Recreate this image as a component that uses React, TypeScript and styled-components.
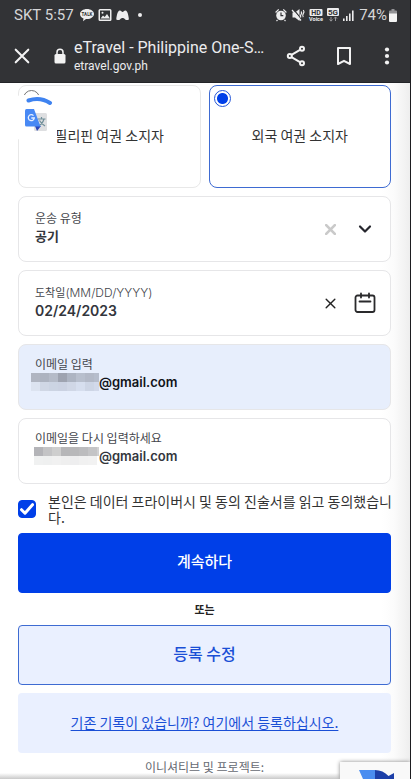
import React from "react";
import styled, { createGlobalStyle, css } from "styled-components";

const BLUE = "#003fe8";
const KR = '"Noto Sans CJK KR", sans-serif';

const GlobalStyle = createGlobalStyle`
  *, *::before, *::after { box-sizing: border-box; }
  html, body { margin: 0; background: #fff; }
  body { font-family: "Roboto", ${KR}; color: #333; }
  button, input, select { font: inherit; color: inherit; margin: 0; }
`;

const Screen = styled.div`
  position: relative;
  height: 100vh;
  overflow: hidden;
  display: flex;
  flex-direction: column;
  border-right: 1px solid #1d1d20;
`;

const BrowserBar = styled.header`
  flex: none;
  background: #323336;
  color: #ececee;
  font-family: "Roboto", sans-serif;
  border-bottom: 1px solid #232428;
`;

const StatusBar = styled.div`
  height: 30px;
  padding: 0 13px 0 14px;
  display: flex;
  align-items: center;
  justify-content: space-between;
  font-size: 15px;
  color: #d6d6d8;
`;

const StatusGroup = styled.div<{ $gap: number }>`
  display: flex;
  align-items: center;
  gap: ${(p) => p.$gap}px;
`;

const AddressRow = styled.div`
  height: 52px;
  padding: 0 12px;
  display: flex;
  align-items: center;
`;

const IconButton = styled.button<{ $w: number; $h?: number }>`
  flex: none;
  width: ${(p) => p.$w}px;
  height: ${(p) => p.$h ?? 32}px;
  padding: 0;
  border: 0;
  background: none;
  display: flex;
  align-items: center;
  justify-content: center;
  cursor: pointer;
`;

const LockSlot = styled.span`
  flex: none;
  width: 42px;
  display: flex;
  justify-content: flex-end;
  padding-right: 8px;
`;

const SiteInfo = styled.div`
  flex: 1;
  min-width: 0;
  white-space: nowrap;
`;

const SiteTitle = styled.div`
  font-size: 16px;
  line-height: 20px;
`;

const SiteHost = styled.div`
  font-size: 12px;
  line-height: 16px;
`;

const ToolGroup = styled.div`
  flex: none;
  display: flex;
  gap: 16px;
`;

const Page = styled.main`
  flex: 1;
  min-height: 0;
  overflow: hidden;
  padding: 2px 19px 0 18px;
  background: linear-gradient(to left, #eeeeee 0, #fbfbfb 16px, #fff 28px);
`;

const Form = styled.form`
  display: flex;
  flex-direction: column;
  gap: 8px;
`;

const Choices = styled.div`
  display: grid;
  grid-template-columns: 1fr 1fr;
  gap: 8px;
`;

const Choice = styled.label<{ $active?: boolean }>`
  position: relative;
  height: 103px;
  padding-bottom: 3px;
  border: 1px solid ${(p) => (p.$active ? "#3e6bd2" : "#e8e8e8")};
  border-radius: 8px;
  background: #fff;
  display: flex;
  align-items: center;
  justify-content: center;
  font: 400 14px/20px ${KR};
`;

const Radio = styled.input`
  appearance: none;
  position: absolute;
  top: 4px;
  left: 4px;
  width: 17px;
  height: 17px;
  margin: 0;
  border: 1px solid #777;
  border-radius: 50%;
  &:checked {
    border-color: #2456d8;
    background: radial-gradient(circle, ${BLUE} 5px, #fff 6px);
  }
`;

const TranslateOverlay = styled.div`
  position: absolute;
  z-index: 1;
  left: 17px;
  top: 95px;
  width: 40px;
  height: 45px;
  background: #fff;
  border-radius: 4px;
`;

const FieldBox = styled.div<{ $filled?: boolean }>`
  height: 66px;
  padding: 0 14px 0 16px;
  border: 1px solid #e6e6e8;
  border-radius: 8px;
  background: ${(p) => (p.$filled ? "#e7eefc" : "#fff")};
  color: ${(p) => (p.$filled ? "#111319" : "#33363d")};
  display: flex;
  align-items: center;
  gap: 12px;
`;

const FieldBody = styled.div<{ $raised?: boolean }>`
  flex: 1;
  min-width: 0;
  display: flex;
  flex-direction: column;
  padding-bottom: ${(p) => (p.$raised ? 8 : 4)}px;
`;

const FieldLabel = styled.label<{ $compact?: boolean }>`
  font: 400 ${(p) => (p.$compact ? 11 : 12)}px/18px ${KR};
  color: #44464c;
`;

const LatinLabel = styled.span`
  font: 300 12px/18px "Inter", sans-serif;
`;

const controlText = css`
  width: 100%;
  height: 18px;
  padding: 0;
  border: 0;
  outline: 0;
  background: none;
  appearance: none;
`;

const TextInput = styled.input<{ $size: number }>`
  ${controlText}
  font: 600 ${(p) => p.$size}px/18px "Inter", ${KR};
`;

const Select = styled.select`
  ${controlText}
  font: 600 13px/18px ${KR};
`;

const ValueRow = styled.div`
  display: flex;
  align-items: center;
`;

const Consent = styled.label`
  display: flex;
  align-items: center;
  gap: 12px;
  margin-right: -4px;
  min-height: 33px;
  font: 400 14px/16px ${KR};
  word-break: break-all;
`;

const CheckWrap = styled.span`
  position: relative;
  flex: none;
  width: 18px;
  height: 18px;
`;

const CheckBox = styled.input`
  appearance: none;
  display: block;
  width: 18px;
  height: 18px;
  margin: 0;
  border: 1px solid ${BLUE};
  border-radius: 4px;
  &:checked {
    background: ${BLUE};
  }
  &:checked + svg {
    display: block;
  }
`;

const CheckMark = styled.svg`
  display: none;
  position: absolute;
  inset: 0;
  pointer-events: none;
`;

const ActionButton = styled.button<{ $primary?: boolean }>`
  height: 60px;
  padding: 0 0 4px;
  border: 1px solid ${(p) => (p.$primary ? BLUE : "#3e6bd2")};
  border-radius: 4px;
  background: ${(p) => (p.$primary ? BLUE : "#eaf0ff")};
  color: ${(p) => (p.$primary ? "#fff" : "#1a4fd6")};
  font: 500 ${(p) => (p.$primary ? 15 : 16)}px/24px ${KR};
  cursor: pointer;
`;

const OrText = styled.div`
  font: 700 11px/16px ${KR};
  text-align: center;
  color: #222;
`;

const LinkPanel = styled.div`
  height: 60px;
  padding-bottom: 2px;
  border-radius: 4px;
  background: #eaf0ff;
  display: flex;
  align-items: center;
  justify-content: center;
`;

const RecordLink = styled.a`
  font: 400 14px/20px ${KR};
  color: #1a4fd6;
  text-decoration: underline;
  text-underline-offset: 2px;
`;

const FooterTitle = styled.div`
  font: 400 12px/16px ${KR};
  text-align: center;
  color: #666a72;
  margin-top: -2px;
`;

const BottomShade = styled.div`
  position: absolute;
  left: 0;
  right: 0;
  bottom: 0;
  height: 6px;
  background: linear-gradient(to bottom, rgba(120, 120, 120, 0), rgba(120, 120, 120, 0.4));
`;

const CaptchaBadge = styled.div`
  position: absolute;
  right: 0;
  bottom: 0;
  width: 70px;
  height: 17px;
  overflow: hidden;
  background: #f9f9f9;
  box-shadow: 0 0 4px #888;
  display: flex;
  align-items: flex-start;
  padding: 7px 0 0 18px;
`;

function StatusIconsLeft() {
  return (
    <svg width="66" height="14" viewBox="0 0 66 14" fill="#ededee">
      <path d="M7 1C3.200 1 0 3.200 0 6.100c0 2 1.400 3.600 3.500 4.400L3 13.200l3-2.100h1c3.900 0 7-2.100 7-5S10.900 1 7 1z" />
      <text x="7" y="8" fontSize="4.500" fontWeight="700" textAnchor="middle" fill="#323336" fontFamily="Roboto">TALK</text>
      <path fillRule="evenodd" d="M20 1h10a1.500 1.500 0 0 1 1.500 1.500v9A1.500 1.500 0 0 1 30 13H20a1.500 1.500 0 0 1-1.500-1.500v-9A1.500 1.500 0 0 1 20 1zm0 1.500v9h10v-9z" />
      <path d="M20.500 10.500l2.500-3 1.700 1.600L27 6l3 4.500z" />
      <circle cx="22.500" cy="4.800" r="1" />
      <path d="M36.300 11.500c.3-3.300 1.200-8.600 3.500-8.900 1.300-.1 1.900 1.500 2.800 1.500s1.500-1.600 2.800-1.500c2.300.3 3.200 5.600 3.500 8.900-1.500.8-2.700.8-3.700 0-.7-1-1.600-1.500-2.600-1.500s-1.900.5-2.600 1.500c-1 .8-2.200.8-3.700 0z" />
      <circle cx="60" cy="7" r="2" />
    </svg>
  );
}

function StatusIconsRight() {
  return (
    <svg width="80" height="16" viewBox="0 0 80 16" fill="#ededee">
      <circle cx="6" cy="8.500" r="4.800" />
      <path d="M.6 5.500 3.700 2.300M11.400 5.500 8.300 2.300M2.500 13l-1 1M9.500 13l1 1" stroke="#ededee" strokeWidth="1.200" />
      <path d="M6 5.500v3.200h2.300" stroke="#323336" strokeWidth="1.200" fill="none" />
      <path d="M17.500 5.500H20L24.500 2v12L20 10.500h-2.500z" />
      <path d="M18.300 2.200l9 11" stroke="#323336" strokeWidth="1.200" />
      <path d="M17 3l9 10.500M26 4.500q1.400 1.500 0 3t0 3M28.300 3q1.400 1.800 0 3.600t0 3.600" stroke="#ededee" strokeWidth="1.200" fill="none" />
      <rect x="34.500" y="2" width="13" height="7" rx="1" />
      <text x="41" y="8" fontSize="7" fontWeight="700" textAnchor="middle" fill="#323336" fontFamily="Roboto">HD</text>
      <text x="41" y="14" fontSize="5.500" fontWeight="700" textAnchor="middle" fontFamily="Roboto">Voice</text>
      <rect x="52" y="1" width="12" height="8" rx="1" />
      <text x="58" y="8" fontSize="8" fontWeight="700" textAnchor="middle" fill="#323336" fontFamily="Roboto">5G</text>
      <path d="M56 10v4M54.500 12.500l1.500 1.700 1.500-1.700M60.500 14v-4M59 11.600l1.500-1.700 1.500 1.700" stroke="#98989b" fill="none" />
      <path d="M68 11.500h1.600V14H68zM71 9h1.600v5H71zM74 6.500h1.600V14H74zM77 3.500h1.600V14H77z" />
    </svg>
  );
}

const Battery = () => (
  <svg width="8" height="13" viewBox="0 0 8 13">
    <path d="M2.500 0h3v1.500H7a1 1 0 0 1 1 1V5H0V2.500a1 1 0 0 1 1-1h1.500z" fill="#929295" />
    <path d="M0 4.500h8V12a1 1 0 0 1-1 1H1a1 1 0 0 1-1-1z" fill="#f4f4f4" />
  </svg>
);

function Cross({ size, stroke, width }: { size: number; stroke: string; width: number }) {
  return (
    <svg width={size} height={size} viewBox="0 0 14 14" fill="none" stroke={stroke} strokeWidth={width} strokeLinecap="round">
      <path d="M1.500 1.500l11 11M12.500 1.500l-11 11" />
    </svg>
  );
}

function Mosaic({ top, bottom, width }: { top: string[]; bottom: string[]; width: number }) {
  return (
    <svg width={width} height="18" viewBox={`0 0 ${width} 18`} shapeRendering="crispEdges" aria-hidden="true">
      {top.map((c, i) => (
        <rect key={i} x={i * 9} y="0" width="9" height="9" fill={c} />
      ))}
      {bottom.map((c, i) => (
        <rect key={i} x={i * 9} y="9" width="9" height="9" fill={c} />
      ))}
    </svg>
  );
}

const MosaicSlot = styled.span<{ $outdent: number }>`
  flex: none;
  display: flex;
  height: 18px;
  margin-left: -${(p) => p.$outdent}px;
`;

export default function App() {
  return (
    <>
      <GlobalStyle />
      <Screen>
        <BrowserBar>
          <StatusBar>
            <StatusGroup $gap={6}>
              <span>SKT 5:57</span>
              <StatusIconsLeft />
            </StatusGroup>
            <StatusGroup $gap={4}>
              <StatusIconsRight />
              <StatusGroup $gap={2}>
                <span>74%</span>
                <Battery />
              </StatusGroup>
            </StatusGroup>
          </StatusBar>
          <AddressRow>
            <IconButton $w={20} aria-label="Close">
              <Cross size={16} stroke="#f3f3f3" width={1.8} />
            </IconButton>
            <LockSlot>
              <svg width="12" height="16" viewBox="0 0 12 16">
                <rect x="0.500" y="6" width="11" height="9.500" rx="1.500" fill="#f3f3f3" />
                <path d="M3 7V4.300a3 3 0 0 1 6 0V7" fill="none" stroke="#f3f3f3" strokeWidth="1.500" />
              </svg>
            </LockSlot>
            <SiteInfo>
              <SiteTitle>eTravel - Philippine One-S…</SiteTitle>
              <SiteHost>etravel.gov.ph</SiteHost>
            </SiteInfo>
            <ToolGroup>
              <IconButton $w={32} aria-label="Share">
                <svg width="20" height="22" viewBox="0 0 20 22" fill="none" stroke="#f3f3f3" strokeWidth="2">
                  <path d="M5.500 9.800l8.500-5M5.500 12.200l8.500 5" />
                  <circle cx="3.800" cy="11" r="2" />
                  <circle cx="16" cy="3.700" r="2" />
                  <circle cx="16" cy="18.300" r="2" />
                </svg>
              </IconButton>
              <IconButton $w={32} aria-label="Bookmark">
                <svg width="16" height="20" viewBox="0 0 16 20" fill="none" stroke="#f3f3f3" strokeWidth="2" strokeLinejoin="round">
                  <path d="M2 2h12v16l-6-3.200L2 18z" />
                </svg>
              </IconButton>
              <IconButton $w={22} aria-label="More">
                <svg width="6" height="18" viewBox="0 0 6 18" fill="#f3f3f3">
                  <circle cx="3" cy="2.500" r="2.100" />
                  <circle cx="3" cy="9" r="2.100" />
                  <circle cx="3" cy="15.500" r="2.100" />
                </svg>
              </IconButton>
            </ToolGroup>
          </AddressRow>
        </BrowserBar>

        <Page>
          <Form onSubmit={(e) => e.preventDefault()}>
            <Choices>
              <Choice>
                <Radio type="radio" name="passport" />
                필리핀 여권 소지자
              </Choice>
              <Choice $active>
                <Radio type="radio" name="passport" defaultChecked />
                외국 여권 소지자
              </Choice>
            </Choices>

            <FieldBox>
              <FieldBody>
                <FieldLabel htmlFor="transport">운송 유형</FieldLabel>
                <Select id="transport" defaultValue="air">
                  <option value="air">공기</option>
                </Select>
              </FieldBody>
              <IconButton type="button" $w={24} aria-label="Clear transport">
                <Cross size={11} stroke="#cacaca" width={3.4} />
              </IconButton>
              <IconButton type="button" $w={22} aria-label="Open list">
                <svg width="14" height="10" viewBox="0 0 14 10" fill="none" stroke="#25262d" strokeWidth="2.200" strokeLinecap="round" strokeLinejoin="round">
                  <path d="M2 2.500l5 5 5-5" />
                </svg>
              </IconButton>
            </FieldBox>

            <FieldBox>
              <FieldBody>
                <FieldLabel htmlFor="arrival" $compact>
                  도착일<LatinLabel>(MM/DD/YYYY)</LatinLabel>
                </FieldLabel>
                <TextInput id="arrival" $size={14} defaultValue="02/24/2023" />
              </FieldBody>
              <IconButton type="button" $w={24} aria-label="Clear date">
                <Cross size={11} stroke="#222" width={1.8} />
              </IconButton>
              <IconButton type="button" $w={22} aria-label="Open calendar">
                <svg width="22" height="22" viewBox="0 0 22 22" fill="none" stroke="#2a2a2c" strokeWidth="1.800" strokeLinecap="round">
                  <rect x="1.500" y="3.500" width="19" height="16.500" rx="2" />
                  <path d="M7 1.500v4M15 1.500v4M5.500 9.500h11" />
                </svg>
              </IconButton>
            </FieldBox>

            <FieldBox $filled>
              <FieldBody $raised>
                <FieldLabel htmlFor="email">이메일 입력</FieldLabel>
                <ValueRow>
                  <MosaicSlot $outdent={4}>
                    <Mosaic
                      width={68}
                      top={["#b0b5c1", "#adb3c0", "#b5bbc8", "#9ea3b0", "#adb4c2", "#b8bfcd", "#b3b9c7", "#b6bdcc"]}
                      bottom={["#dce3f0", "#d0d7e5", "#ccd4e3", "#cbd2e2", "#d0d7e6", "#d6deee", "#cdd5e5", "#d2d9ea"]}
                    />
                  </MosaicSlot>
                  <TextInput id="email" $size={13} defaultValue="@gmail.com" />
                </ValueRow>
              </FieldBody>
            </FieldBox>

            <FieldBox>
              <FieldBody $raised>
                <FieldLabel htmlFor="email2">이메일을 다시 입력하세요</FieldLabel>
                <ValueRow>
                  <MosaicSlot $outdent={1}>
                    <Mosaic
                      width={65}
                      top={["#b4b4b8", "#c4c4c6", "#cecece", "#b6b6b8", "#b8b8ba", "#bcbcbe", "#c4c4c6", "#d0d0d2"]}
                      bottom={["#f0f1f1", "#eff0f0", "#f1f1f1", "#efefef", "#eeeeef", "#f1f1f1", "#f2f2f2", "#fff"]}
                    />
                  </MosaicSlot>
                  <TextInput id="email2" $size={13} defaultValue="@gmail.com" />
                </ValueRow>
              </FieldBody>
            </FieldBox>

            <Consent>
              <CheckWrap>
                <CheckBox type="checkbox" defaultChecked />
                <CheckMark width="18" height="18" viewBox="0 0 18 18" fill="none" stroke="#fff" strokeWidth="3" strokeLinecap="round" strokeLinejoin="round">
                  <path d="M3.500 9.700l3.500 3.500 7.500-8.500" />
                </CheckMark>
              </CheckWrap>
              <span>본인은 데이터 프라이버시 및 동의 진술서를 읽고 동의했습니다.</span>
            </Consent>

            <ActionButton $primary type="submit">계속하다</ActionButton>
            <OrText>또는</OrText>
            <ActionButton type="button">등록 수정</ActionButton>
            <LinkPanel>
              <RecordLink href="#">기존 기록이 있습니까? 여기에서 등록하십시오.</RecordLink>
            </LinkPanel>
            <FooterTitle>이니셔티브 및 프로젝트:</FooterTitle>
          </Form>
        </Page>

        <TranslateOverlay>
          <svg width="40" height="45" viewBox="0 0 40 45">
            <path d="M11.500 5.500Q23 1.500 33 8" fill="none" stroke="#3f83f0" strokeWidth="4" strokeLinecap="round" />
            <rect x="17" y="18" width="13" height="18" rx="1.500" fill="#dedfe1" />
            <path d="M20.500 24h8M24.500 22v2M27 24q-1.500 5-5.500 7M22.500 25.500q2 3.500 5.500 5.500" stroke="#708f99" strokeWidth="1.200" fill="none" />
            <path d="M18 31h6l-4 5z" fill="#2b46b8" />
            <path d="M9.500 14H17l6.500 17.500H9.500A1.500 1.500 0 0 1 8 30V15.500A1.500 1.500 0 0 1 9.500 14z" fill="#4889f4" />
            <path d="M16.500 20.600a3 3 0 1 0 .8 2.400H14.300" stroke="#e9f1ff" strokeWidth="1.300" fill="none" />
          </svg>
        </TranslateOverlay>

        <BottomShade />
        <CaptchaBadge>
          <svg width="40" height="34" viewBox="0 0 40 34">
            <path d="M1 1h16v9.500q-6 1-7.500 8L1 15l4-5z" fill="#4a8df0" />
            <path d="M17 1q8 0 13.500 6L36 4v14H23l4-5q-4-3.500-10-3z" fill="#1c3fa8" />
          </svg>
        </CaptchaBadge>
      </Screen>
    </>
  );
}
